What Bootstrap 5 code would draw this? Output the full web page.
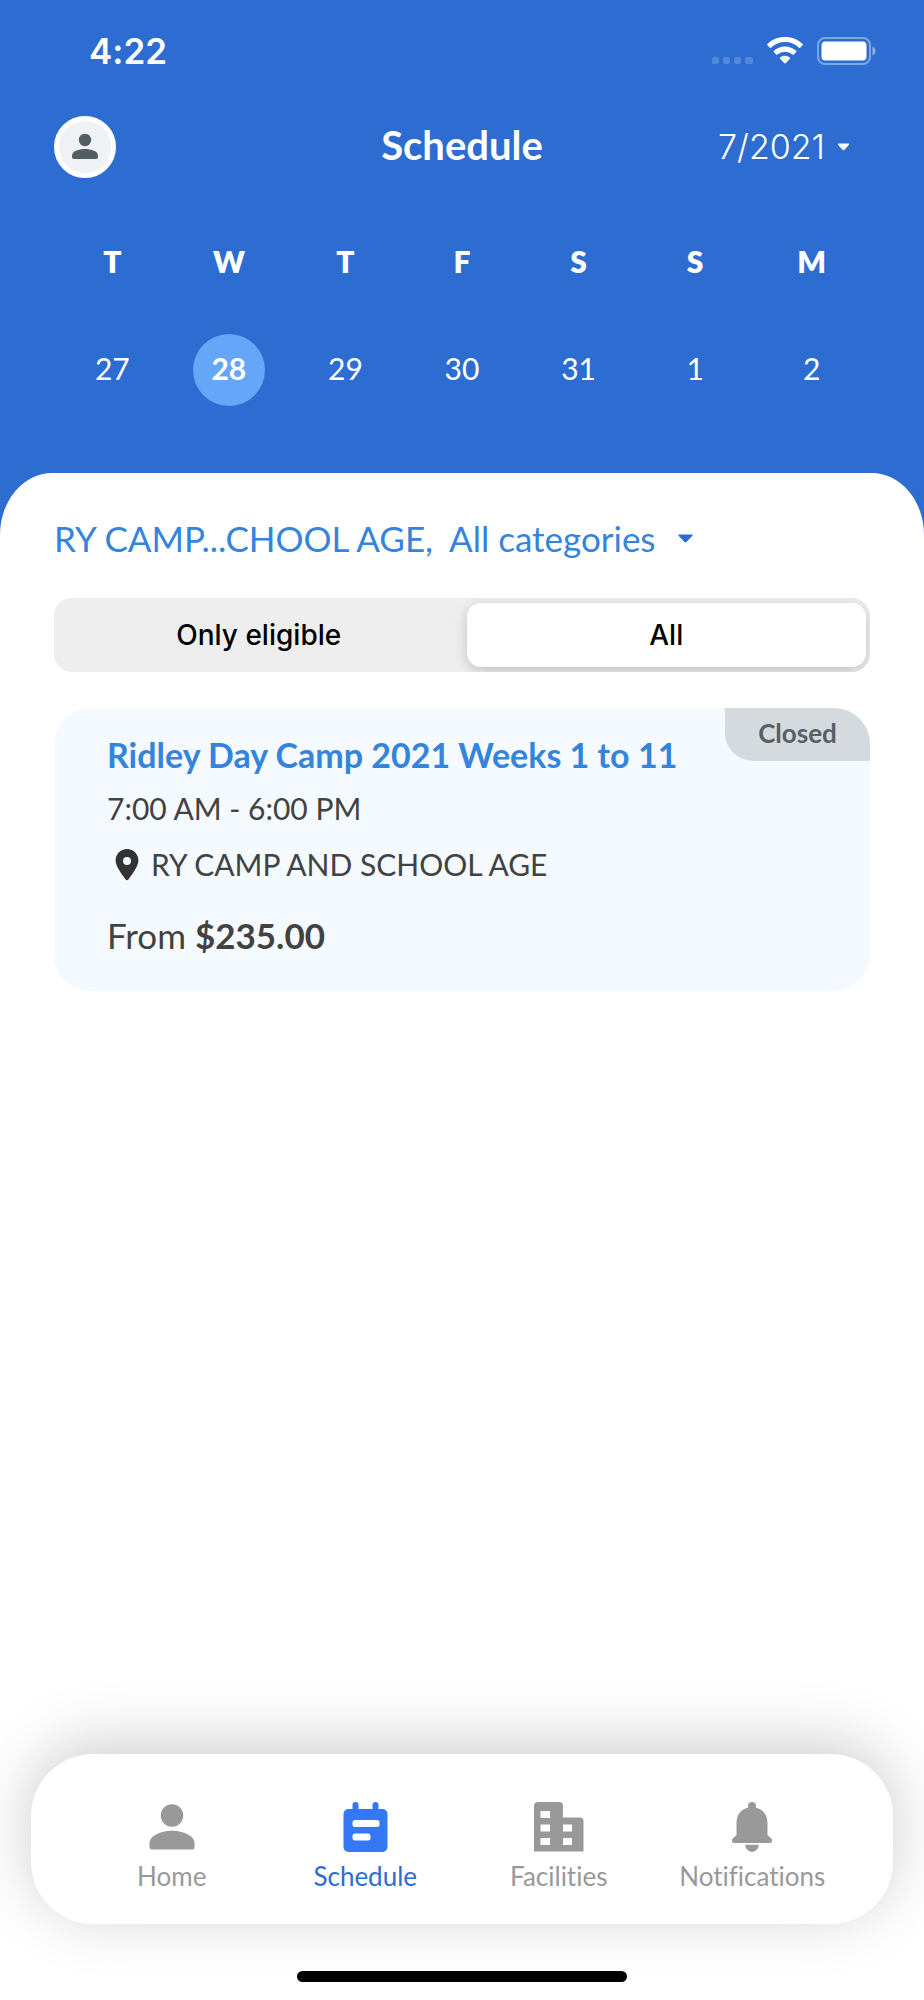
<!DOCTYPE html>
<html lang="en">
<head>
<meta charset="utf-8">
<meta name="viewport" content="width=device-width, initial-scale=1">
<title>Schedule</title>
<link href="https://cdn.jsdelivr.net/npm/bootstrap@5.3.0/dist/css/bootstrap.min.css" rel="stylesheet">
<style>
  :root { --brand: #2d6dd1; --link: #3584db; --edge: 54px; }
  body { font-family: Lato, sans-serif; font-variant-ligatures: none; color: #424242; background: var(--brand); }
  button { font-family: inherit; }
  .system-font { font-family: Inter, "Liberation Sans", sans-serif; }
  .plain-btn { background: none; border: 0; padding: 0; color: inherit; }
  .size-xl { font-size: 40px; line-height: 44px; }
  .size-lg { font-size: 35px; line-height: 42px; }
  .size-md { font-size: 34px; line-height: 44px; }
  .size-sm { font-size: 30px; line-height: 40px; }
  .size-xs { font-size: 26px; line-height: 32px; }

  .status-bar { height: 102px; padding: 0 47px 0 89px; }
  .status-icons { gap: 14px; }
  .app-bar { display: grid; grid-template-columns: 1fr auto 1fr; height: 90px; padding: 0 74px 0 var(--edge); }
  .app-bar h1 { padding: 0 0 4px 20px; font-weight: 700; }
  .avatar { width: 62px; height: 62px; border: 5px solid #fff; background: #eff1f4; }
  .month-btn { gap: 12px; font-weight: 300; }

  .week { padding: 49px var(--edge) 67px; }
  .weekday { font-weight: 800; }
  .week-days { margin-bottom: 53px; }
  .day-btn { width: 72px; height: 72px; padding-bottom: 4px; }
  .day-btn.current { background: #65a6f8; font-weight: 700; }

  .sheet { border-radius: 52px 52px 0 0 / 62px 62px 0 0; padding: 44px var(--edge) 0; }
  .filter-btn { color: var(--link); gap: 22px; }
  .segments { background: #eee; border-radius: 18px; padding: 5px 4px 5px 5px; gap: 8px; margin-top: 39px; height: 74px; overflow: hidden; }
  .segments label { border-radius: 14px; color: #000; font-size: 28px; font-weight: 500; cursor: pointer; }
  .segments .btn-check:checked + label { background: #fff; box-shadow: 0 4px 14px rgba(0, 0, 0, .18); }

  .session { background: #f4faff; border-radius: 36px; margin-top: 36px; padding: 25px 53px 35px; }
  .session h2 { color: var(--link); font-weight: 700; }
  .closed-tag { background: #d5dadf; color: #566066; border-radius: 0 36px 0 28px; width: 145px; height: 53px; padding-bottom: 3px; font-weight: 700; }
  .time { margin-top: 11px; }
  .place { gap: 12px; margin-top: 16px; padding-left: 8px; }
  .price { margin-top: 30px; }

  .tab-bar { margin: 0 31px; height: 170px; border-radius: 62px; padding: 42px 44px 0; box-shadow: 0 -10px 64px rgba(0, 0, 0, .2); }
  .tab-bar a { color: #999; text-decoration: none; gap: 4px; }
  .tab-bar a.active { color: var(--brand); }
  .home-bar { width: 330px; height: 11px; margin: 47px auto 18px; background: #000; }
</style>
</head>
<body>
<div class="d-flex flex-column min-vh-100">
  <header class="text-white">
    <div class="status-bar d-flex align-items-center justify-content-between">
      <span class="system-font size-lg fw-semibold">4:22</span>
      <div class="status-icons d-flex align-items-center">
        <svg width="41" height="28" viewBox="0 0 41 28" fill="#5089da" aria-hidden="true">
          <rect y="20" width="7" height="7" rx="2"/><rect x="11" y="20" width="7" height="7" rx="2"/><rect x="22" y="20" width="7" height="7" rx="2"/><rect x="33" y="20" width="8" height="7" rx="2"/>
        </svg>
        <svg width="36" height="28" viewBox="0 0 36 28" fill="#fff" aria-hidden="true">
          <path d="M18 0C11 0 5 2.600 .4 7q-.6.600 0 1.200l2.400 2.500q.6.600 1.200 0A20 20 0 0 1 32 10.700q.6.600 1.200 0l2.400-2.500q.6-.6 0-1.200C31 2.600 25 0 18 0z"/>
          <path d="M18 9.500c-4.400 0-8.200 1.600-11.200 4.400q-.6.600 0 1.200l2.400 2.500q.6.600 1.200 0a11.500 11.500 0 0 1 15.200 0q.6.600 1.200 0l2.400-2.500q.6-.6 0-1.200C26.200 11.100 22.400 9.500 18 9.500z"/>
          <path d="M18 18.800c-1.800 0-3.600.6-4.900 1.700q-.6.600 0 1.200l4.300 4.500q.6.600 1.200 0l4.300-4.500q.6-.6 0-1.200a7.600 7.600 0 0 0-4.900-1.700z"/>
        </svg>
        <svg width="60" height="28" viewBox="0 0 60 28" aria-hidden="true">
          <rect x="1" y="1" width="52" height="26" rx="7" fill="none" stroke="#7ca6e4" stroke-width="2"/>
          <rect x="4.500" y="4.500" width="45" height="19" rx="4" fill="#fff"/>
          <path d="M55.500 9.500c4 1.500 4 7.500 0 9z" fill="#8fb3e8"/>
        </svg>
      </div>
    </div>
    <div class="app-bar align-items-center">
      <button class="avatar rounded-circle p-0 d-flex align-items-center justify-content-center" aria-label="Profile">
        <svg width="26" height="26" viewBox="0 0 26 26" fill="#525e64"><circle cx="13" cy="6" r="6.200"/><path d="M0 23v-1.500c0-4.200 6.500-6.500 13-6.500s13 2.300 13 6.500V23q0 2-2 2H2q-2 0-2-2z"/></svg>
      </button>
      <h1 class="size-xl m-0">Schedule</h1>
      <button class="month-btn plain-btn system-font size-md d-flex align-items-center justify-content-end">7/2021
        <svg width="13" height="8" viewBox="0 0 12 8" fill="#fff" aria-hidden="true"><path d="M.8.500h10.400q1 .3.300 1.200L7 6.800q-1 .9-2 0L.5 1.700Q-.2.800.8.500z"/></svg>
      </button>
    </div>
    <div class="week text-center">
      <div class="week-days row g-0 size-sm">
        <div class="col weekday">T</div><div class="col weekday">W</div><div class="col weekday">T</div><div class="col weekday">F</div><div class="col weekday">S</div><div class="col weekday">S</div><div class="col weekday">M</div>
      </div>
      <div class="row g-0 size-sm">
        <div class="col"><button class="day-btn plain-btn rounded-circle">27</button></div>
        <div class="col"><button class="day-btn plain-btn rounded-circle current" aria-current="date">28</button></div>
        <div class="col"><button class="day-btn plain-btn rounded-circle">29</button></div>
        <div class="col"><button class="day-btn plain-btn rounded-circle">30</button></div>
        <div class="col"><button class="day-btn plain-btn rounded-circle">31</button></div>
        <div class="col"><button class="day-btn plain-btn rounded-circle">1</button></div>
        <div class="col"><button class="day-btn plain-btn rounded-circle">2</button></div>
      </div>
    </div>
  </header>

  <div class="sheet bg-white flex-grow-1">
    <main>
      <button class="filter-btn plain-btn size-lg d-flex align-items-center">
        <span class="d-flex gap-3"><span>RY CAMP...CHOOL AGE,</span><span>All categories</span></span>
        <svg width="15" height="9" viewBox="0 0 15 9" fill="#2d6dd1" aria-hidden="true"><path d="M1 .500h13q1.200.3.400 1.300L8.500 8q-1 .9-2 0L.6 1.800Q-.2.800 1 .500z"/></svg>
      </button>
      <div class="segments system-font d-flex" role="group" aria-label="Eligibility">
        <input class="btn-check" type="radio" name="eligibility" id="only-eligible">
        <label class="w-50 d-flex align-items-center justify-content-center" for="only-eligible">Only eligible</label>
        <input class="btn-check" type="radio" name="eligibility" id="all-sessions" checked>
        <label class="w-50 d-flex align-items-center justify-content-center" for="all-sessions">All</label>
      </div>
      <article class="session position-relative">
        <span class="closed-tag size-xs position-absolute top-0 end-0 d-flex align-items-center justify-content-center">Closed</span>
        <h2 class="size-md m-0">Ridley Day Camp 2021 Weeks 1 to 11</h2>
        <div class="time size-sm">7:00 AM - 6:00 PM</div>
        <div class="place size-sm d-flex align-items-center">
          <svg width="24" height="34" viewBox="0 0 24 34" aria-hidden="true"><path fill="#333" fill-rule="evenodd" d="M12 2C5.600 2 .6 7 .6 13.300c0 5.200 4 11 9.800 19q1.600 2 3.200 0c5.800-8 9.800-13.800 9.800-19C23.400 7 18.400 2 12 2zm0 8a4 4 0 1 1 0 8 4 4 0 0 1 0-8z"/></svg>
          <span>RY CAMP AND SCHOOL AGE</span>
        </div>
        <div class="price size-lg">From <strong>$235.00</strong></div>
      </article>
    </main>
  </div>

  <footer class="bg-white">
    <nav class="tab-bar bg-white size-xs" aria-label="Main">
      <div class="row g-0">
        <a class="col d-flex flex-column align-items-center" href="#home">
          <svg width="60" height="60" viewBox="0 0 60 60" fill="currentColor"><circle cx="30" cy="19.500" r="11.200"/><path d="M7.500 51v-4c0-7 11-12.300 22.500-12.300S52.500 40 52.500 47v4q0 2.500-2.500 2.500H10q-2.500 0-2.500-2.500z"/></svg>
          Home</a>
        <a class="active col d-flex flex-column align-items-center" href="#schedule" aria-current="page">
          <svg width="60" height="60" viewBox="0 0 60 60"><g fill="#3478f6"><rect x="8.500" y="13" width="44" height="43" rx="5"/><rect x="17.500" y="6" width="6" height="14" rx="3"/><rect x="37.500" y="6" width="6" height="14" rx="3"/></g><g fill="#fff"><rect x="17.500" y="24" width="27" height="7" rx="2.500"/><rect x="17.500" y="37.500" width="18" height="7" rx="2.500"/></g></svg>
          Schedule</a>
        <a class="col d-flex flex-column align-items-center" href="#facilities">
          <svg width="60" height="60" viewBox="0 0 60 60" fill="currentColor"><path fill-rule="evenodd" d="M5 55.500V10q0-4 4-4h21q4 0 4 4v11.500h17q3.500 0 3.500 3.500v30.500zM11.500 15v7h9.500v-7zm0 13.500v7h9.500v-7zM11.500 42v7h9.500v-7zm22.500-13.500v7h9v-7zm0 13.500v7h9v-7z"/></svg>
          Facilities</a>
        <a class="col d-flex flex-column align-items-center" href="#notifications">
          <svg width="60" height="60" viewBox="0 0 60 60" fill="currentColor"><path d="M30 6a4 4 0 0 0-4 4v1.800C18.500 13.500 14.500 19.500 14.500 27v12l-3.800 3.600c-1.600 2-.7 4.400 1.300 4.400h36c2 0 2.900-2.400 1.300-4.400L45.500 39V27c0-7.500-4-13.500-11.500-15.200V10a4 4 0 0 0-4-4zM23.300 48.700h13.400a6.700 7.200 0 0 1-13.400 0z"/></svg>
          Notifications</a>
      </div>
    </nav>
    <div class="home-bar rounded-pill"></div>
  </footer>
</div>
<script src="https://cdn.jsdelivr.net/npm/bootstrap@5.3.0/dist/js/bootstrap.bundle.min.js"></script>
</body>
</html>
